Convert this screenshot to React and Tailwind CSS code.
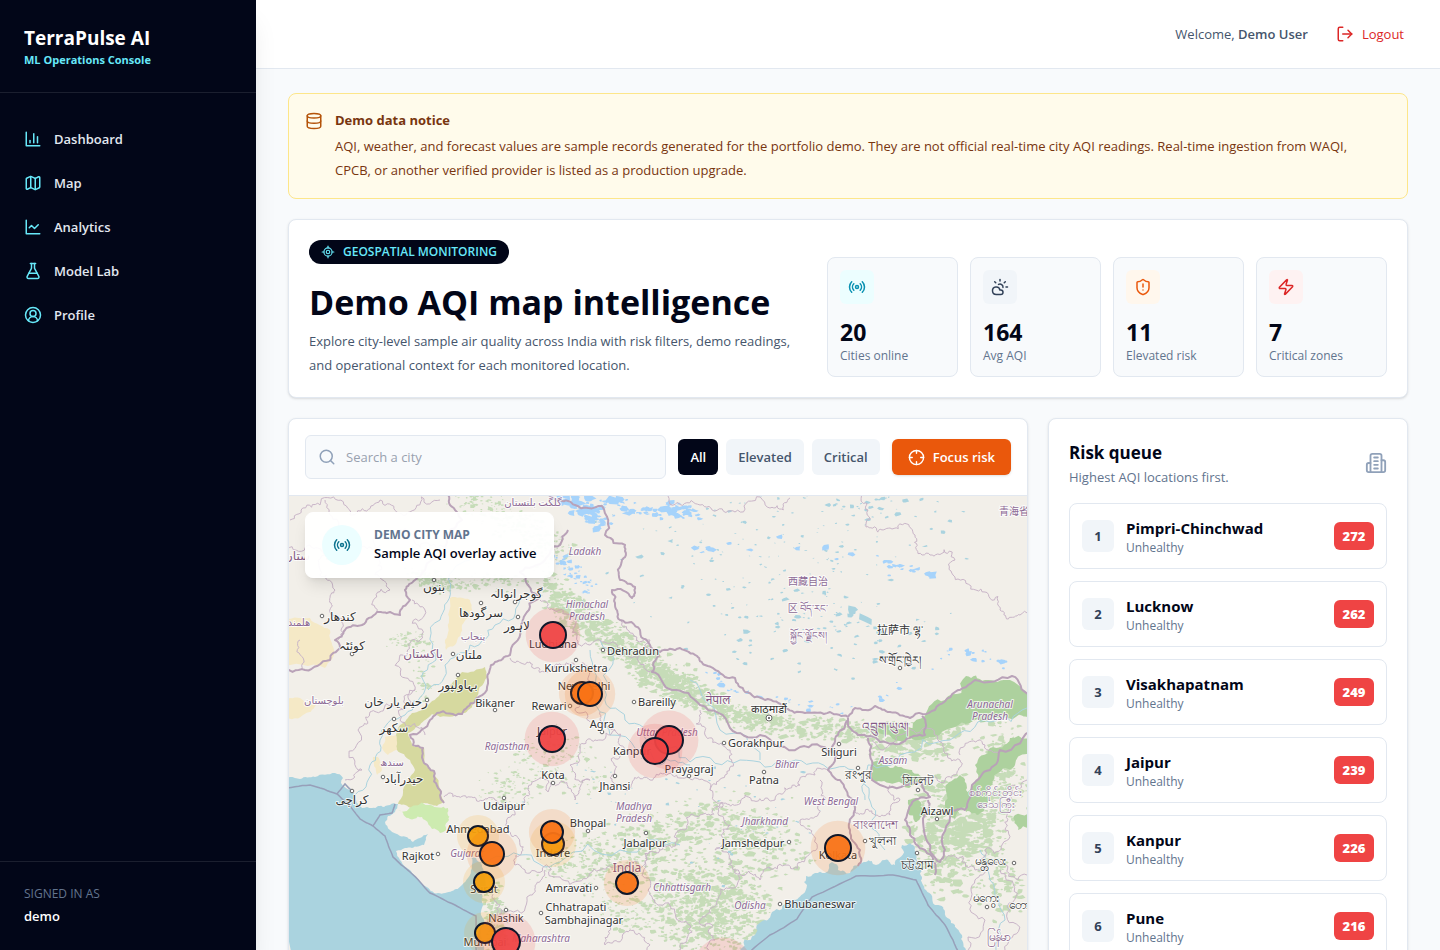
import {
  CloudSun,
  Crosshair,
  Database,
  FlaskConical,
  LocateFixed,
  LogOut,
  Map as MapIcon,
  Radio,
  Search,
  ShieldAlert,
  CircleUserRound,
  Zap,
} from "lucide-react";

function StrokeIcon({ size = 18, className, children }) {
  return (
    <svg
      width={size}
      height={size}
      viewBox="0 0 24 24"
      fill="none"
      stroke="currentColor"
      strokeWidth="2"
      strokeLinecap="round"
      strokeLinejoin="round"
      className={className}
      aria-hidden="true"
    >
      {children}
    </svg>
  );
}

function BarsIcon({ size, className }) {
  return (
    <StrokeIcon size={size} className={className}>
      <path d="M3 3v18h18" />
      <path d="M18 17V9" />
      <path d="M13 17V5" />
      <path d="M8 17v-3" />
    </StrokeIcon>
  );
}

function TrendIcon({ size, className }) {
  return (
    <StrokeIcon size={size} className={className}>
      <path d="M3 3v18h18" />
      <path d="m19 9-5 5-4-4-3 3" />
    </StrokeIcon>
  );
}

function TowerIcon({ size, className }) {
  return (
    <StrokeIcon size={size} className={className}>
      <path d="M6 22V4a2 2 0 0 1 2-2h8a2 2 0 0 1 2 2v18Z" />
      <path d="M6 12H4a2 2 0 0 0-2 2v6a2 2 0 0 0 2 2h2" />
      <path d="M18 9h2a2 2 0 0 1 2 2v9a2 2 0 0 1-2 2h-2" />
      <path d="M10 6h4" />
      <path d="M10 10h4" />
      <path d="M10 14h4" />
      <path d="M10 18h4" />
    </StrokeIcon>
  );
}

const navItems = [
  { label: "Dashboard", icon: BarsIcon },
  { label: "Map", icon: MapIcon },
  { label: "Analytics", icon: TrendIcon },
  { label: "Model Lab", icon: FlaskConical },
  { label: "Profile", icon: CircleUserRound },
];

const stats = [
  { label: "Cities online", value: 20, icon: Radio, tone: "bg-[#ecfeff] text-[#0891b2]" },
  { label: "Avg AQI", value: 164, icon: CloudSun, tone: "bg-slate-100 text-slate-700" },
  { label: "Elevated risk", value: 11, icon: ShieldAlert, tone: "bg-[#fff7ed] text-[#ea580c]" },
  { label: "Critical zones", value: 7, icon: Zap, tone: "bg-[#fef2f2] text-[#dc2626]" },
];

const riskQueue = [
  { city: "Pimpri-Chinchwad", aqi: 272 },
  { city: "Lucknow", aqi: 262 },
  { city: "Visakhapatnam", aqi: 249 },
  { city: "Jaipur", aqi: 239 },
  { city: "Kanpur", aqi: 226 },
  { city: "Pune", aqi: 216 },
  { city: "Ludhiana", aqi: 208 },
];

// Map geometry, all in the map's own coordinate space
const MAP_VIEW = "289 496 738 640";

function seeded(seed) {
  let s = seed;
  return () => {
    s = (s * 16807) % 2147483647;
    return s / 2147483647;
  };
}

// Roughens a polyline by midpoint displacement so borders look surveyed
function rough(points, seed, amount = 0.28, depth = 3) {
  const rand = seeded(seed * 7919 + 13);
  let line = points;
  for (let d = 0; d < depth; d++) {
    const next = [line[0]];
    for (let i = 1; i < line.length; i++) {
      const [x0, y0] = line[i - 1];
      const [x1, y1] = line[i];
      const k = (rand() - 0.5) * amount;
      if (Math.hypot(x1 - x0, y1 - y0) > 3) {
        next.push([(x0 + x1) / 2 - (y1 - y0) * k, (y0 + y1) / 2 + (x1 - x0) * k]);
      }
      next.push([x1, y1]);
    }
    line = next;
  }
  return "M" + line.map(([x, y]) => `${x.toFixed(1)} ${y.toFixed(1)}`).join("L");
}

// Scatters small irregular patches around a path of centres
function scatter(centres, count, spread, size, seed, slant = 0.6) {
  const rand = seeded(seed * 104729 + 7);
  let d = "";
  for (let i = 0; i < count; i++) {
    const t = rand() * (centres.length - 1);
    const a = centres[Math.floor(t)];
    const b = centres[Math.min(Math.floor(t) + 1, centres.length - 1)];
    const f = t - Math.floor(t);
    const cx = a[0] + (b[0] - a[0]) * f + (rand() + rand() - 1) * spread;
    const cy = a[1] + (b[1] - a[1]) * f + (rand() + rand() - 1) * spread * slant;
    const r = size * (0.3 + rand() * rand());
    const sides = 6;
    for (let k = 0; k < sides; k++) {
      const ang = (k / sides) * Math.PI * 2;
      const rr = r * (0.4 + rand());
      d += `${k ? "L" : "M"}${(cx + Math.cos(ang) * rr * 1.4).toFixed(1)} ${(cy + Math.sin(ang) * rr * 0.8).toFixed(1)}`;
    }
    d += "Z";
  }
  return d;
}

const westSea = [
  [280, 780], [300, 779], [315, 777], [335, 773], [343, 778], [341, 783], [350, 790], [356, 800], [362, 808], [372, 808],
  [378, 806], [390, 805], [398, 804], [395, 812], [388, 816], [385, 822], [390, 830], [400, 836], [413, 842], [420, 838],
  [428, 834], [424, 845], [412, 848], [405, 848], [396, 851], [400, 860], [412, 873], [425, 886], [438, 893], [452, 891],
  [462, 885], [468, 878], [472, 868], [471, 857], [476, 858], [482, 865], [485, 880], [482, 895], [483, 905], [484, 925],
  [480, 935], [484, 950], [490, 1140], [280, 1140], [280, 780],
];

const bengalSea = [
  [660, 1140], [700, 985], [740, 950], [755, 935], [765, 920], [772, 912], [790, 902], [803, 894], [807, 885], [804, 882],
  [806, 876], [815, 873], [825, 873], [832, 862], [838, 870], [850, 873], [858, 865], [866, 862], [876, 865], [885, 860],
  [895, 865], [903, 850], [902, 845], [910, 843], [915, 848], [918, 862], [922, 877], [926, 890], [935, 905], [945, 912],
  [955, 925], [962, 935], [966, 950], [975, 1140], [660, 1140],
];

const rannOfKutch = [
  [485, 667], [487, 677], [476, 700], [465, 713], [440, 717], [432, 714], [420, 725], [408, 733], [412, 745], [424, 748],
  [424, 763], [434, 772], [440, 790], [444, 801], [437, 806], [424, 803], [412, 808], [398, 804], [403, 790], [415, 770],
  [410, 760], [397, 750], [396, 735], [400, 725], [412, 713], [428, 705], [445, 690], [455, 680], [462, 672], [485, 667],
];

const saltMarsh = [
  [398, 810], [430, 805], [448, 808], [449, 820], [440, 833], [432, 829], [425, 820], [410, 819], [398, 810],
];

const deserts = [
  [[280, 622], [310, 618], [330, 630], [334, 650], [325, 668], [280, 671], [280, 622]],
  [[450, 598], [470, 600], [472, 610], [462, 625], [455, 645], [446, 650], [445, 640], [449, 620], [450, 598]],
  [[280, 700], [300, 698], [316, 705], [303, 715], [280, 720], [280, 700]],
  [[385, 737], [396, 735], [400, 748], [388, 755], [382, 748], [385, 737]],
  [[373, 757], [378, 757], [382, 770], [377, 775], [373, 757]],
];

const forests = [
  [[966, 676], [985, 680], [1010, 680], [1040, 700], [1040, 722], [985, 722], [955, 727], [930, 737], [900, 741], [868, 738], [872, 730], [895, 728], [925, 716], [945, 700], [966, 676]],
  [[872, 762], [890, 768], [912, 770], [922, 780], [895, 783], [873, 781], [872, 762]],
  [[975, 765], [990, 748], [1010, 738], [1040, 728], [1040, 745], [1015, 765], [1000, 772], [988, 792], [978, 815], [966, 812], [970, 790], [975, 765]],
  [[908, 800], [918, 798], [925, 815], [915, 822], [908, 800]],
  [[946, 785], [960, 775], [966, 790], [955, 820], [948, 812], [946, 785]],
  [[1015, 815], [1040, 812], [1040, 832], [1018, 830], [1015, 815]],
];

const countryBorders = [
  [[280, 670], [305, 670], [330, 660], [340, 648], [335, 640], [345, 630], [362, 625], [377, 612], [390, 612], [400, 615], [410, 600], [405, 590], [415, 580], [425, 570], [445, 555], [450, 530], [462, 520], [450, 505], [445, 490]],
  [[545, 490], [560, 500], [575, 505], [602, 506], [605, 535], [625, 545], [622, 560], [620, 580], [635, 587], [632, 598], [612, 590], [615, 605], [620, 620], [640, 630], [650, 645], [660, 652], [680, 648], [697, 656], [705, 665], [725, 677], [735, 678], [745, 692], [765, 700], [785, 708], [805, 713], [830, 712], [848, 717], [855, 708], [875, 706], [890, 712], [910, 718], [935, 710], [955, 692], [975, 680], [1012, 676], [1030, 695]],
  [[568, 530], [560, 545], [545, 560], [520, 572], [528, 585], [540, 597], [525, 615], [520, 630], [510, 655], [495, 662], [488, 680], [475, 702], [462, 714], [437, 713], [430, 720], [410, 735], [413, 745], [423, 748], [424, 763], [434, 771], [440, 790], [444, 803]],
  [[660, 655], [652, 672], [672, 690], [700, 705], [730, 728], [760, 735], [800, 747], [832, 752], [838, 735], [848, 720]],
  [[848, 718], [858, 735], [880, 742], [905, 741], [925, 735], [922, 716]],
  [[835, 750], [828, 770], [840, 780], [846, 790], [855, 810], [850, 830], [860, 850], [858, 866]],
  [[868, 738], [870, 755], [872, 780], [905, 785], [922, 783], [930, 797], [915, 800], [905, 820], [910, 835], [925, 850], [935, 875]],
  [[1035, 728], [1000, 750], [990, 770], [972, 785], [965, 810], [950, 812], [945, 850], [940, 862], [930, 845], [925, 815], [928, 800]],
];

const seaBorders = [
  [[280, 789], [310, 785], [337, 794], [350, 806], [360, 819], [373, 826], [385, 836], [393, 857], [410, 872], [430, 893], [455, 905], [476, 916], [477, 960], [470, 1140]],
  [[337, 794], [345, 784], [352, 791]],
  [[373, 826], [380, 815], [392, 813], [395, 804]],
  [[745, 955], [770, 935], [797, 919], [812, 897], [856, 876], [893, 875], [916, 880], [928, 905], [945, 925], [960, 955]],
];

const stateBorders = [
  [[444, 797], [470, 797], [495, 800], [515, 815], [508, 830], [520, 845], [515, 865], [530, 873], [560, 877], [600, 870], [640, 868], [660, 850]],
  [[520, 810], [528, 790], [540, 778], [548, 792], [560, 782], [575, 800], [590, 780], [570, 765], [580, 750], [600, 740], [615, 730], [600, 712]],
  [[615, 730], [625, 750], [612, 775], [625, 790], [650, 780], [680, 778], [710, 790], [722, 778], [730, 750], [705, 735], [700, 710]],
  [[510, 658], [530, 662], [545, 672], [570, 664], [590, 672], [585, 690], [575, 710], [590, 722]],
  [[540, 600], [560, 610], [575, 625], [590, 645], [620, 655], [652, 670]],
  [[710, 790], [720, 803], [745, 795], [775, 800], [800, 785], [815, 775], [828, 770]],
  [[722, 803], [730, 825], [715, 850], [735, 870], [760, 880], [785, 865], [805, 858], [815, 840], [800, 820], [825, 800], [820, 780]],
  [[660, 850], [680, 830], [700, 815], [722, 803]],
  [[660, 850], [650, 880], [660, 905], [690, 925], [680, 950], [660, 980]],
  [[735, 870], [720, 895], [700, 920], [715, 940], [700, 985]],
  [[480, 895], [500, 905], [490, 915], [530, 895], [545, 870]],
  [[600, 920], [605, 945], [630, 930], [650, 945], [640, 1000]],
  [[280, 560], [310, 545], [330, 560], [345, 540], [375, 550], [400, 530], [430, 545], [445, 555]],
  [[290, 520], [320, 505], [350, 515], [380, 500], [410, 512], [440, 500]],
  [[325, 500], [332, 540], [320, 575], [335, 590], [330, 612], [338, 640]],
  [[380, 545], [375, 575], [390, 590], [377, 612]],
  [[412, 600], [425, 610], [420, 640], [400, 655], [415, 690], [395, 705], [370, 712], [358, 730], [362, 770], [345, 780]],
  [[300, 640], [302, 670]],
  [[415, 690], [400, 720], [425, 735]],
  [[620, 620], [650, 640], [655, 655]],
  [[668, 496], [700, 505], [735, 512], [770, 508], [790, 498]],
  [[862, 490], [868, 510], [866, 527], [890, 528], [915, 535], [930, 555], [955, 560], [953, 575], [985, 592], [1000, 610], [1020, 615], [1030, 613]],
  [[890, 785], [900, 800], [890, 815], [865, 812], [850, 800]],
  [[1027, 780], [1010, 800], [1005, 830], [985, 850], [975, 880], [985, 920], [975, 960]],
  [[872, 740], [900, 735], [940, 742], [960, 760], [945, 780], [925, 785]],
  [[960, 755], [985, 745], [1000, 750]],
  [[945, 860], [975, 870], [1000, 860], [1027, 875]],
  [[1000, 870], [1010, 910], [1005, 950]],
];

const rivers = [
  [[470, 560], [450, 590], [440, 620], [436, 660], [425, 690], [405, 715], [380, 740], [370, 765], [355, 795]],
  [[520, 600], [495, 625], [470, 645], [445, 665], [428, 690]],
  [[600, 640], [605, 690], [625, 720], [655, 745], [690, 762], [740, 760], [790, 762], [835, 768], [865, 785], [872, 820], [885, 850]],
  [[1027, 708], [990, 722], [950, 740], [900, 755], [868, 765], [865, 800]],
  [[590, 650], [588, 700], [610, 735], [660, 765], [690, 765]],
  [[475, 868], [520, 855], [560, 862], [620, 850], [680, 845]],
  [[980, 850], [990, 880], [1005, 920], [1000, 960]],
  [[690, 680], [720, 730], [760, 760]],
];

const labels = [
  ["گلگت بلتستان", 533, 506, "region"],
  ["Ladakh", 585, 555, "state"],
  ["Himachal", 587, 608, "state"],
  ["Pradesh", 587, 620, "state"],
  ["بنوں", 434, 591, "urdu"],
  ["گوجرانوالہ", 516, 598, "urdu"],
  ["سرگودھا", 481, 617, "urdu"],
  ["لاہور", 517, 630, "urdu"],
  ["پنجاب", 473, 640, "region"],
  ["پاکستان", 423, 658, "country"],
  ["ملتان", 469, 659, "urdu"],
  ["بہاولپور", 458, 689, "urdu"],
  ["رحیم یار خان", 396, 706, "urdu"],
  ["بلوچستان", 324, 704, "region"],
  ["هلمند", 299, 626, "region"],
  ["کندھار", 340, 621, "urdu"],
  ["کوئٹہ", 352, 650, "urdu"],
  ["ستان", 297, 560, "country"],
  ["سکھر", 394, 732, "urdu"],
  ["سندھ", 392, 766, "region"],
  ["حیدرآباد", 404, 783, "urdu"],
  ["کراچی", 352, 804, "urdu"],
  ["Ludhiana", 553, 648, "city"],
  ["Kurukshetra", 576, 672, "city"],
  ["Dehradun", 633, 655, "city"],
  ["New Delhi", 584, 690, "city"],
  ["Rewari", 549, 710, "city"],
  ["Bikaner", 495, 707, "city"],
  ["Bareilly", 657, 706, "city"],
  ["Agra", 602, 728, "city"],
  ["Jaipur", 552, 735, "city"],
  ["Rajasthan", 507, 750, "state"],
  ["Uttar Pradesh", 667, 736, "state"],
  ["Kanpur", 632, 755, "city"],
  ["Prayagraj", 689, 773, "city"],
  ["Gorakhpur", 756, 747, "city"],
  ["Patna", 764, 784, "city"],
  ["Bihar", 787, 768, "state"],
  ["Kota", 553, 779, "city"],
  ["Jhansi", 615, 790, "city"],
  ["Udaipur", 504, 810, "city"],
  ["Madhya", 634, 810, "state"],
  ["Pradesh", 634, 822, "state"],
  ["Bhopal", 588, 827, "city"],
  ["Jabalpur", 645, 847, "city"],
  ["Ahmedabad", 478, 833, "city"],
  ["Rajkot", 418, 860, "city"],
  ["Gujarat", 467, 857, "state"],
  ["Indore", 553, 857, "city"],
  ["Surat", 484, 893, "city"],
  ["India", 627, 872, "country"],
  ["Amravati", 569, 892, "city"],
  ["Chhattisgarh", 682, 891, "state"],
  ["Chhatrapati", 576, 911, "city"],
  ["Sambhajinagar", 584, 924, "city"],
  ["Nashik", 506, 922, "city"],
  ["Mumbai", 485, 946, "city"],
  ["Maharashtra", 541, 942, "state"],
  ["West Bengal", 831, 805, "state"],
  ["Jharkhand", 765, 825, "state"],
  ["Jamshedpur", 753, 847, "city"],
  ["Kolkata", 838, 859, "city"],
  ["Odisha", 750, 909, "state"],
  ["Bhubaneswar", 820, 908, "city"],
  ["Siliguri", 839, 756, "city"],
  ["Assam", 893, 764, "state"],
  ["Aizawl", 937, 815, "city"],
  ["Arunachal", 990, 708, "state"],
  ["Pradesh", 990, 720, "state"],
  ["नेपाल", 718, 704, "country"],
  ["काठमाडौं", 769, 713, "city"],
  ["রংপুর", 858, 779, "urdu"],
  ["সিলেট", 918, 785, "urdu"],
  ["বাংলাদেশ", 875, 829, "country"],
  ["খুলনা", 882, 845, "urdu"],
  ["চট্টগ্রাম", 917, 869, "urdu"],
  ["西藏自治", 808, 585, "region"],
  ["区 བོད་རང་", 808, 612, "region"],
  ["སྐྱོང་ལྗོངས།", 808, 639, "region"],
  ["拉萨市 ལྷ་", 900, 634, "city"],
  ["ས་གྲོང་ཁྱེར།", 900, 664, "city"],
  ["འབྲུག་ཡུལ།", 885, 731, "country"],
  ["青海省", 1014, 515, "region"],
  ["စစ်ကိုင်းတိုင်း", 996, 796, "burmese"],
  ["ဒေသကြီး", 996, 808, "burmese"],
  ["မန္တလေး", 991, 865, "urdu"],
  ["မကွေး", 986, 902, "urdu"],
  ["တောင်", 1022, 909, "urdu"],
  ["မြန်မာ", 998, 941, "country"],
];

const labelTone = {
  city: "fill-[#333] text-[11px]",
  urdu: "fill-[#333] text-[12px]",
  state: "fill-[#8d6a96] text-[10px] italic",
  region: "fill-[#8d6a96] text-[10px]",
  burmese: "fill-[#8d6a96] text-[11px]",
  country: "fill-[#855a85] text-[12px]",
};

const townDots = [
  [434, 580], [481, 603], [515, 602], [518, 617], [322, 616], [352, 654], [453, 654], [458, 675], [427, 700], [394, 719],
  [383, 777], [352, 791], [576, 660], [603, 650], [570, 706], [495, 710], [634, 702], [602, 732], [724, 743], [764, 772],
  [689, 776], [553, 783], [615, 776], [504, 798], [588, 831], [646, 833], [438, 854], [596, 888], [541, 913], [506, 910],
  [789, 842], [780, 904], [839, 744], [937, 819], [858, 768], [918, 790], [865, 841], [917, 853], [1014, 863], [987, 907],
  [900, 668],
];

const markers = [
  { city: "Ludhiana", x: 553, y: 635, r: 13, color: "#ef4444" },
  { city: "Gurugram", x: 582, y: 693, r: 11, color: "#f97316" },
  { city: "Delhi", x: 590, y: 694, r: 12, color: "#f97316" },
  { city: "Jaipur", x: 552, y: 739, r: 13, color: "#ef4444" },
  { city: "Lucknow", x: 669, y: 740, r: 14, color: "#ef4444" },
  { city: "Kanpur", x: 655, y: 751, r: 13, color: "#ef4444" },
  { city: "Ahmedabad", x: 478, y: 836, r: 10, color: "#f59e0b" },
  { city: "Vadodara", x: 492, y: 854, r: 12, color: "#f97316" },
  { city: "Surat", x: 484, y: 882, r: 10, color: "#f59e0b" },
  { city: "Indore", x: 553, y: 844, r: 11, color: "#f59e0b" },
  { city: "Ujjain", x: 552, y: 832, r: 11, color: "#f97316" },
  { city: "Nagpur", x: 627, y: 883, r: 11, color: "#f97316" },
  { city: "Kolkata", x: 838, y: 848, r: 13, color: "#f97316" },
  { city: "Mumbai", x: 485, y: 933, r: 10, color: "#f59e0b" },
  { city: "Pune", x: 506, y: 942, r: 14, color: "#ef4444" },
  { city: "Visakhapatnam", x: 723, y: 967, r: 14, color: "#ef4444" },
];

const hills = [
  scatter([[550, 590], [580, 620], [620, 645], [660, 672], [700, 695]], 800, 20, 3, 1, 1),
  scatter([[640, 670], [700, 700], [760, 722], [850, 732], [930, 732]], 800, 14, 3, 2, 1),
  scatter([[470, 500], [510, 520], [545, 535], [560, 560]], 300, 30, 2, 3),
  scatter([[420, 575], [440, 585], [520, 580]], 240, 18, 2, 4),
  scatter([[600, 860], [640, 850], [700, 820], [760, 830], [770, 860]], 600, 55, 3, 5),
  scatter([[660, 900], [700, 900], [740, 900], [700, 950]], 800, 50, 3, 6, 1),
  scatter([[940, 790], [970, 830], [930, 840], [950, 880]], 420, 36, 4, 7, 1),
  scatter([[1000, 740], [1005, 790], [975, 850], [1015, 900]], 420, 30, 3, 8, 1),
  scatter([[500, 800], [520, 770], [560, 740], [590, 790]], 220, 34, 2, 9),
  scatter([[492, 890], [500, 930], [495, 960]], 160, 14, 3, 10, 1),
  scatter([[545, 870], [590, 850], [620, 910], [640, 920]], 260, 32, 2, 11),
  scatter([[880, 748], [930, 752], [960, 710], [1010, 700]], 260, 22, 4, 12),
  scatter([[396, 640], [420, 640], [430, 700]], 100, 16, 2, 13),
].join("");

const lakes = [
  scatter([[665, 530], [780, 560], [880, 560]], 150, 110, 2, 21, 0.8),
  scatter([[700, 620], [800, 630], [900, 640]], 80, 60, 3, 22, 0.8),
  scatter([[850, 610], [853, 612], [891, 640]], 7, 5, 6, 23),
  scatter([[810, 500], [930, 515]], 40, 60, 3, 24, 0.4),
].join("");

const glaciers = [
  scatter([[560, 497], [590, 510], [600, 525]], 60, 20, 5, 31),
  scatter([[600, 500], [660, 512], [700, 510]], 70, 18, 4, 32),
  scatter([[560, 555], [575, 575], [590, 590]], 45, 14, 3, 33, 1),
  scatter([[690, 550], [770, 540], [890, 565], [930, 575]], 30, 16, 4, 34),
  scatter([[700, 665], [740, 695], [850, 712], [960, 650], [1010, 665]], 50, 14, 3, 35),
].join("");

const ponds = scatter([[700, 870], [780, 800], [560, 800], [640, 780], [900, 870]], 60, 60, 2, 41);

function Basemap() {
  return (
    <svg
      viewBox={MAP_VIEW}
      preserveAspectRatio="xMinYMin slice"
      className="block h-[620px] w-full font-['Noto_Sans','Noto_Sans_CJK_SC','DejaVu_Sans',sans-serif]"
      role="img"
      aria-label="Sample AQI by city across India"
    >
      <rect x="280" y="490" width="760" height="660" fill="#f2efe9" />
      {deserts.map((shape, i) => (
        <path key={i} d={rough(shape, i + 3)} fill="#f5e9c6" />
      ))}
      <path d={hills} fill="#add19e" opacity="0.65" />
      {forests.map((shape, i) => (
        <path key={i} d={rough(shape, i + 20, 0.5)} fill="#add19e" />
      ))}
      <path d={rough(rannOfKutch, 5, 0.2)} fill="#d6d99f" />
      <path d={rough(saltMarsh, 6, 0.5)} fill="#cdebb0" />
      <path d={rough(westSea, 1, 0.3)} fill="#aad3df" />
      <path d={rough(bengalSea, 2, 0.5)} fill="#aad3df" />
      <path d={lakes + ponds} fill="#aad3df" />
      <path d={glaciers} fill="#a6d3fb" />
      <g fill="none" stroke="#aad3df" strokeWidth="1">
        {rivers.map((line, i) => (
          <path key={i} d={rough(line, i + 80, 0.5)} />
        ))}
      </g>
      <g fill="none" stroke="#c9b5c8" strokeWidth="1">
        {stateBorders.map((line, i) => (
          <path key={i} d={rough(line, i + 40, 0.7, 4)} />
        ))}
      </g>
      <g fill="none" stroke="#b9a2b8" strokeWidth="2" strokeLinejoin="round">
        {countryBorders.map((line, i) => (
          <path key={i} d={rough(line, i + 60, 0.35, 3)} />
        ))}
      </g>
      <g fill="none" stroke="#979fb9" strokeWidth="1.5">
        {seaBorders.map((line, i) => (
          <path key={i} d={rough(line, i + 70, 0.05)} />
        ))}
      </g>
      <g fill="#fff" stroke="#666" strokeWidth="1">
        {townDots.map(([x, y]) => (
          <circle key={`${x}-${y}`} cx={x} cy={y} r="1.8" />
        ))}
        <circle cx="769" cy="718" r="3" />
      </g>
      <circle cx="769" cy="718" r="1" fill="#444" />
      <g textAnchor="middle" stroke="#fff" strokeOpacity="0.75" strokeWidth="2" strokeLinejoin="round" paintOrder="stroke">
        {labels.map(([text, x, y, kind]) => (
          <text key={`${text}-${x}-${y}`} x={x} y={y} className={labelTone[kind]}>
            {text}
          </text>
        ))}
      </g>
      {markers.map((m) => (
        <g key={m.city}>
          <circle cx={m.x} cy={m.y} r={m.r * 2.1} fill={m.color} fillOpacity="0.15" />
          <circle cx={m.x} cy={m.y} r={m.r} fill={m.color} fillOpacity="0.94" stroke="#0f172a" strokeWidth="2" />
        </g>
      ))}
    </svg>
  );
}

function Sidebar() {
  return (
    <aside className="z-10 flex w-64 shrink-0 flex-col bg-slate-950 text-white shadow-xl">
      <div className="border-b border-white/10 p-6">
        <p className="text-[19px]/7 font-bold">TerraPulse AI</p>
        <p className="text-[11px]/4 font-bold text-[#67e8f9]">ML Operations Console</p>
      </div>
      <nav className="flex-1 px-3 py-6">
        {navItems.map(({ label, icon: Icon }) => (
          <a key={label} href="#" className="flex items-center gap-3 px-3 py-3 text-[13px]/5 font-semibold text-slate-200">
            <Icon size={18} className="text-[#67e8f9]" />
            {label}
          </a>
        ))}
      </nav>
      <div className="border-t border-white/10 p-6">
        <p className="text-[12px]/4 text-slate-500 uppercase">Signed in as</p>
        <p className="mt-1 text-[13px]/5 font-semibold">demo</p>
      </div>
    </aside>
  );
}

function Header() {
  return (
    <header className="flex h-[69px] shrink-0 items-center justify-end gap-4 border-b border-slate-200 bg-white px-6 text-[13px]/5">
      <p className="text-slate-600">
        Welcome, <span className="font-semibold">Demo User</span>
      </p>
      <button type="button" className="flex items-center gap-2 px-3 py-2 text-[#dc2626]">
        <LogOut size={18} />
        Logout
      </button>
    </header>
  );
}

function Notice() {
  return (
    <section className="flex gap-3 rounded-lg border border-[#fde68a] bg-[#fffbeb] py-4 pr-8 pl-4">
      <Database size={18} className="mt-0.5 shrink-0 text-[#b45309]" />
      <div>
        <h2 className="text-[13px]/5 font-bold text-[#78350f]">Demo data notice</h2>
        <p className="mt-1 text-[13px]/6 text-[#78350f]">
          AQI, weather, and forecast values are sample records generated for the portfolio demo. They are not official
          real-time city AQI readings. Real-time ingestion from WAQI, CPCB, or another verified provider is listed as a
          production upgrade.
        </p>
      </div>
    </section>
  );
}

function Hero() {
  return (
    <section className="flex items-end justify-between gap-6 rounded-lg border border-slate-200 bg-white p-5 shadow-sm">
      <div>
        <p className="flex w-fit items-center gap-2 rounded-full bg-slate-950 px-3 py-1 text-[12px]/4 font-semibold text-[#67e8f9] uppercase">
          <LocateFixed size={14} />
          Geospatial monitoring
        </p>
        <h1 className="mt-4 text-[34px]/[45px] font-bold text-slate-950">Demo AQI map intelligence</h1>
        <p className="mt-1 text-[13px]/6 text-slate-600">
          Explore city-level sample air quality across India with risk filters, demo readings, and operational context
          for each monitored location.
        </p>
      </div>
      <div className="grid w-[560px] shrink-0 grid-cols-4 gap-3">
        {stats.map(({ label, value, icon: Icon, tone }) => (
          <div key={label} className="rounded-lg border border-slate-200 bg-slate-50 p-3">
            <span className={`inline-flex rounded-md p-2 align-top ${tone}`}>
              <Icon size={18} />
            </span>
            <p className="mt-3 text-[23px]/8 font-bold text-slate-950">{value}</p>
            <p className="text-[12px]/4 font-medium text-slate-500">{label}</p>
          </div>
        ))}
      </div>
    </section>
  );
}

function MapPanel() {
  return (
    <section className="min-w-0 flex-1 overflow-hidden rounded-lg border border-slate-200 bg-white shadow-sm">
      <div className="flex items-center gap-3 border-b border-slate-200 p-4">
        <label className="flex h-11 min-w-0 flex-1 items-center gap-[10px] rounded-md border border-slate-200 bg-slate-50 px-3">
          <Search size={18} className="shrink-0 text-slate-400" />
          <input
            type="search"
            aria-label="Search a city"
            placeholder="Search a city"
            className="min-w-0 flex-1 bg-transparent text-[13px]/5 outline-none placeholder:text-gray-400"
          />
        </label>
        <div className="flex gap-2 text-[13px]/5 font-semibold">
          <button type="button" className="rounded-md bg-slate-950 px-3 py-2 text-white">All</button>
          <button type="button" className="rounded-md bg-slate-100 px-3 py-2 text-slate-600">Elevated</button>
          <button type="button" className="rounded-md bg-slate-100 px-3 py-2 text-slate-600">Critical</button>
        </div>
        <button
          type="button"
          className="flex items-center gap-2 rounded-md bg-[#ea580c] px-4 py-2 text-[13px]/5 font-semibold text-white shadow-sm"
        >
          <Crosshair size={17} />
          Focus risk
        </button>
      </div>
      <div className="relative">
        <Basemap />
        <div className="absolute top-4 left-4 flex items-center gap-3 rounded-lg border border-white bg-white/95 px-4 py-3 shadow-lg">
          <span className="rounded-full bg-[#ecfeff] p-[11px] text-[#0e7490]">
            <Radio size={18} />
          </span>
          <div>
            <p className="text-[12px]/4 font-bold text-slate-500 uppercase">Demo city map</p>
            <p className="text-[13px]/5 font-semibold text-slate-950">Sample AQI overlay active</p>
          </div>
        </div>
      </div>
    </section>
  );
}

function RiskQueue() {
  return (
    <section className="w-[360px] shrink-0 rounded-lg border border-slate-200 bg-white p-5 shadow-sm">
      <div className="mb-4 flex items-center justify-between">
        <div>
          <h2 className="text-[17px]/7 font-bold text-slate-950">Risk queue</h2>
          <p className="text-[13px]/5 text-slate-500">Highest AQI locations first.</p>
        </div>
        <TowerIcon size={22} className="text-slate-400" />
      </div>
      <ol className="space-y-3">
        {riskQueue.map((item, index) => (
          <li key={item.city} className="flex items-center gap-3 rounded-lg border border-slate-200 p-3">
            <span className="flex size-8 items-center justify-center rounded-md bg-slate-100 text-[13px]/5 font-bold text-slate-700">
              {index + 1}
            </span>
            <div className="min-w-0 flex-1">
              <p className="text-[15px]/6 font-bold text-slate-950">{item.city}</p>
              <p className="text-[12px]/4 font-medium text-slate-500">Unhealthy</p>
            </div>
            <span className="w-10 rounded-md bg-[#ef4444] py-1 text-center text-[13px]/5 font-extrabold text-white">
              {item.aqi}
            </span>
          </li>
        ))}
      </ol>
    </section>
  );
}

export default function App() {
  return (
    <div className="flex h-screen overflow-hidden bg-slate-50 font-['Open_Sans','Noto_Sans',sans-serif]">
      <Sidebar />
      <div className="flex min-w-0 flex-1 flex-col">
        <Header />
        <main className="flex-1 space-y-5 overflow-y-auto px-8 py-6 [scrollbar-width:none]">
          <Notice />
          <Hero />
          <div className="flex items-start gap-5">
            <MapPanel />
            <RiskQueue />
          </div>
        </main>
      </div>
    </div>
  );
}
